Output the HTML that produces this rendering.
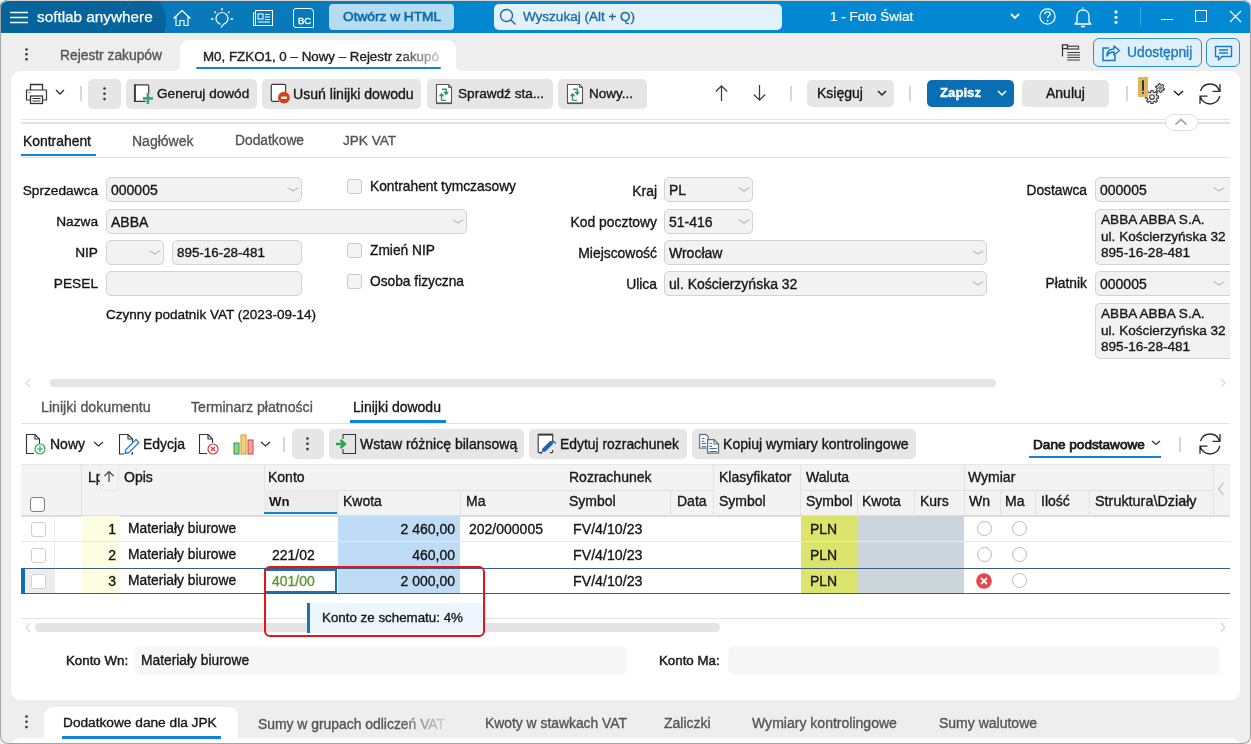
<!DOCTYPE html>
<html><head><meta charset="utf-8">
<style>
*{box-sizing:border-box;margin:0;padding:0}
html,body{width:1251px;height:744px;overflow:hidden;background:#f3f1ef;font-family:"Liberation Sans",sans-serif;color:#161616;font-size:14px}
.a{position:absolute}
.t{position:absolute;white-space:nowrap;font-size:14px;line-height:16px;-webkit-text-stroke:0.35px currentColor;will-change:transform}
svg{position:absolute;overflow:visible}
#win{position:absolute;left:0;top:0;width:1251px;height:744px;background:#eeeeee;border-radius:8px;overflow:hidden}
#frame{position:absolute;left:0;top:0;width:1251px;height:744px;border:1px solid #a4a4a4;border-top-color:#d9d3cd;border-radius:8px;pointer-events:none}
#title{position:absolute;left:0;top:0;width:1251px;height:33px;background:linear-gradient(90deg,#0878b9 0,#0879ba 300px,#0387d1 490px,#0289d4 1251px)}
.btn{position:absolute;background:#e6e6e6;border-radius:5px}
.sep{position:absolute;width:2px;background:#d6d6d6}
.inp{position:absolute;background:#f2f2f2;border:1px solid #d3d3d3;border-radius:5px;height:24.5px}
.inp .v{position:absolute;left:4px;top:4px;font-size:14px;line-height:16px;white-space:nowrap;-webkit-text-stroke:0.35px currentColor;will-change:transform}
.chev{position:absolute;right:5.5px;top:7px;width:6px;height:6px;border-right:1px solid #b5b5b5;border-bottom:1px solid #b5b5b5;transform:scale(1.35,.8) rotate(45deg)}
.cb{position:absolute;width:15px;height:15px;border:1px solid #c9c9c9;border-radius:3px;background:#f4f4f4}
.gray{color:#555}
</style></head><body>
<div id="win">
  <div id="title">
    <svg style="left:0;top:0" width="200" height="33"><path d="M0 0 H157 C163 6 166 14 166 21 C166 27 165 30 164.5 33 H0 Z" fill="#06649c"/><path d="M108 33 L132 0" stroke="#2b7fb3" stroke-width="1" opacity=".5"/></svg>
    <svg style="left:9px;top:11px" width="20" height="13"><path d="M1 1.5H19M1 6.5H19M1 11.5H19" stroke="#fff" stroke-width="1.4"/></svg>
    <div class="t" style="left:37px;top:8px;font-size:15.3px;line-height:17px;color:#fff;-webkit-text-stroke:.25px #fff">softlab anywhere</div>

    <!-- home -->
    <svg style="left:172px;top:9px" width="20" height="18" viewBox="0 0 20 18"><path d="M1.5 9.5 L10 1.5 L18.5 9.5 M4 7.5 V16.5 H8 V11.5 H12 V16.5 H16 V7.5" fill="none" stroke="#fff" stroke-width="1.15" stroke-linejoin="round"/></svg>
    <!-- bulb -->
    <svg style="left:210px;top:7px" width="24" height="22" viewBox="0 0 24 22"><path d="M10.5 17.3 A6 6 0 1 1 13.5 17.3 L11 20.5" fill="none" stroke="#fff" stroke-width="1.2"/><path d="M12 1V3.5 M4.5 4.5 L6 6 M19.5 4.5 L18 6 M1 12H3.5 M20.5 12H23" stroke="#fff" stroke-width="1.3"/></svg>
    <!-- news -->
    <svg style="left:252px;top:9px" width="22" height="18" viewBox="0 0 22 18"><path d="M3.5 1.5 H20.5 V16.5 H1.5 V4 H3.5 Z M3.5 4 V16.5" fill="none" stroke="#fff" stroke-width="1.05"/><rect x="6" y="5" width="5" height="5" fill="none" stroke="#fff" stroke-width="1.05"/><path d="M13 5.5H18 M13 8H18 M13 10.5H18 M6 13H18" stroke="#fff" stroke-width="1.05"/></svg>
    <!-- BC -->
    <div class="a" style="left:293px;top:8px;width:21px;height:20px;border:1.1px solid #fff;border-radius:3px 4px 1px 3px"></div>
    <div class="t" style="left:298px;top:15px;font-size:9.5px;line-height:11px;color:#fff">BC</div>
    <!-- Otworz -->
    <div class="a" style="left:329px;top:4px;width:125px;height:26px;background:#b5dcf2;border-radius:4px"></div>
    <div class="t" style="left:343px;top:9px;font-size:13.7px;color:#0a6aa6;-webkit-text-stroke:0.6px #0a6aa6">Otwórz w HTML</div>
    <!-- search -->
    <div class="a" style="left:494px;top:4px;width:288px;height:26px;background:#e2f1fb;border-radius:5px"></div>
    <svg style="left:499px;top:8px" width="18" height="18" viewBox="0 0 18 18"><circle cx="7.5" cy="7.5" r="6" fill="none" stroke="#1d6da5" stroke-width="1.4"/><path d="M12 12 L16.5 16.5" stroke="#1d6da5" stroke-width="1.5"/></svg>
    <div class="t" style="left:523px;top:9px;font-size:13.5px;color:#1c6aa2">Wyszukaj (Alt + Q)</div>
    <div class="t" style="left:830px;top:8.8px;font-size:13.5px;color:#fff;-webkit-text-stroke:0.2px #fff">1 - Foto Świat</div>
    <svg style="left:1010px;top:13px" width="10" height="7" viewBox="0 0 10 7"><path d="M1 1 L5 5 L9 1" fill="none" stroke="#fff" stroke-width="1.8"/></svg>
    <!-- help -->
    <svg style="left:1038.3px;top:7.2px" width="19" height="19" viewBox="0 0 19 19"><circle cx="9.5" cy="9.5" r="7.6" fill="none" stroke="#fff" stroke-width="1.2"/><path d="M6.8 7.2 C6.8 5.5 8 4.6 9.5 4.6 C11 4.6 12.2 5.5 12.2 7 C12.2 8.8 9.6 9 9.6 11.2" fill="none" stroke="#fff" stroke-width="1.3"/><circle cx="9.6" cy="13.8" r=".9" fill="#fff"/></svg>
    <!-- bell -->
    <svg style="left:1074px;top:7px" width="18" height="21" viewBox="0 0 18 21"><path d="M3 15 V9 C3 5.5 5.5 3 9 3 C12.5 3 15 5.5 15 9 V15 L17 17 H1 L3 15 Z" fill="none" stroke="#fff" stroke-width="1.3" stroke-linejoin="round"/><path d="M8.5 1 H9.5 M7 19.5 H11" stroke="#fff" stroke-width="1.4"/></svg>
    <!-- dots -->
    <svg style="left:1113px;top:10px" width="6" height="17"><rect x="1.6" y="0.6" width="2.8" height="2.8" rx=".6" fill="#fff"/><rect x="1.6" y="5.9" width="2.8" height="2.8" rx=".6" fill="#fff"/><rect x="1.6" y="10.9" width="2.8" height="2.8" rx=".6" fill="#fff"/></svg>
    <div class="a" style="left:1140px;top:7px;width:1px;height:20px;background:#3aa3dc"></div>
    <div class="a" style="left:1161px;top:18.5px;width:12px;height:1.2px;background:#fff"></div>
    <div class="a" style="left:1195px;top:10px;width:12px;height:12px;border:1.2px solid #fff"></div>
    <svg style="left:1229px;top:10px" width="13" height="13" viewBox="0 0 13 13"><path d="M1 1 L12 12 M12 1 L1 12" stroke="#fff" stroke-width="1.2"/></svg>
  </div>

  <!-- tab bar -->
  <svg style="left:23.5px;top:47.5px" width="5" height="13"><circle cx="2.5" cy="1.4" r="1.25" fill="#333"/><circle cx="2.5" cy="6.3" r="1.25" fill="#333"/><circle cx="2.5" cy="11.2" r="1.25" fill="#333"/></svg>
  <div class="t gray" style="left:60px;top:48px;font-size:13.8px">Rejestr zakupów</div>
  <div class="a" style="left:180px;top:40px;width:276px;height:40px;background:#fff;border-radius:9px 9px 0 0"></div>
  <svg style="left:171px;top:62px" width="10" height="10"><path d="M10 0 V10 H0 C6 10 10 6 10 0 Z" fill="#fff"/></svg>
  <svg style="left:455px;top:62px" width="10" height="10"><path d="M0 0 V10 H10 C4 10 0 6 0 0 Z" fill="#fff"/></svg>
  <div class="t" style="left:203px;top:46.5px;line-height:20px;font-size:13.35px;color:#222;-webkit-mask-image:linear-gradient(90deg,#000 0,#000 190px,rgba(0,0,0,.25) 236px);">M0, FZKO1, 0 – Nowy – Rejestr zakupó</div>
  <div class="a" style="left:196px;top:67px;width:245px;height:2.2px;background:#0f86d4;border-radius:1px"></div>
  <!-- list icon -->
  <svg style="left:1060px;top:43px" width="22" height="20" viewBox="0 0 22 20"><path d="M2.5 1.8 V13.6" stroke="#333" stroke-width="1.2"/><rect x="2.5" y="1.8" width="5" height="3.8" fill="none" stroke="#333" stroke-width="1.2"/><rect x="7.5" y="3.2" width="11" height="2.8" fill="none" stroke="#444" stroke-width="1.2"/><path d="M7.2 9.5 H19.9 M7.2 14.4 H19.9" stroke="#2a2a2a" stroke-width="0.9"/><path d="M7.2 12 H19.9 M7.2 17 H19.9" stroke="#777" stroke-width="1.4"/></svg>
  <div class="a" style="left:1093px;top:38px;width:109px;height:29px;background:#dff0fb;border:1px solid #2b8fd3;border-radius:6px"></div>
  <svg style="left:1101px;top:44px" width="20" height="18" viewBox="0 0 20 18"><path d="M8 4 H2 V16.5 H14 V11" fill="none" stroke="#1c79bf" stroke-width="1.5"/><path d="M6 12 C6 7 9 5 13 5 V2 L18.5 6.5 L13 11 V8 C10 8 7.5 9 6 12 Z" fill="none" stroke="#1c79bf" stroke-width="1.5" stroke-linejoin="round"/></svg>
  <div class="t" style="left:1127px;top:45px;font-size:13.8px;color:#1c79bf">Udostępnij</div>
  <div class="a" style="left:1206px;top:38px;width:34px;height:29px;background:#dff0fb;border:1px solid #2b8fd3;border-radius:6px"></div>
  <svg style="left:1214px;top:45px" width="19" height="17" viewBox="0 0 19 17"><path d="M1.5 1.5 H17.5 V11.5 H8 L4.5 15 V11.5 H1.5 Z" fill="none" stroke="#1c79bf" stroke-width="1.4" stroke-linejoin="round"/><path d="M5 5 H14 M5 8 H14" stroke="#1c79bf" stroke-width="1.3"/></svg>

  <!-- panel -->
  <div class="a" id="panel" style="left:11px;top:71px;width:1229px;height:629px;background:#fff;border-radius:9px"></div>
  

  <!-- toolbar -->
  <svg style="left:25px;top:83px" width="23" height="22" viewBox="0 0 23 22"><path d="M5.5 7 V1.5 H17.5 V7" fill="none" stroke="#333" stroke-width="1.3"/><rect x="1.5" y="7" width="20" height="10" rx="0.3" fill="none" stroke="#333" stroke-width="1.2"/><rect x="5.5" y="13" width="12" height="7.5" fill="#fff" stroke="#333" stroke-width="1.3"/><path d="M7.5 15.5 H15.5 M7.5 18 H15.5" stroke="#333" stroke-width="1"/><path d="M3.5 9.5 H5.5" stroke="#1c8fd6" stroke-width="1.2"/></svg>
  <svg style="left:55px;top:89px" width="10" height="7"><path d="M1 1 L5 5 L9 1" fill="none" stroke="#333" stroke-width="1.4"/></svg>
  <div class="sep" style="left:80px;top:86px;height:15px"></div>
  <div class="btn" style="left:88px;top:79px;width:33px;height:30px"></div>
  <svg style="left:102px;top:87px" width="5" height="14"><circle cx="2.5" cy="1.5" r="1.3" fill="#333"/><circle cx="2.5" cy="6.8" r="1.3" fill="#333"/><circle cx="2.5" cy="12.1" r="1.3" fill="#333"/></svg>

  <div class="btn" style="left:126px;top:79px;width:131px;height:30px"></div>
  <svg style="left:133px;top:83px" width="22" height="22" viewBox="0 0 22 22"><path d="M12.7 18.4 H1.8 V1.8 H14.5 Q15.7 1.8 15.7 3 V10" fill="#fff" stroke="#3a3a3a" stroke-width="1.2"/><path d="M1.9 1.4 V18.9" stroke="#3a3a3a" stroke-width="1.9"/><path d="M14.9 10 V20.9 M9.9 15.4 H19.9" stroke="#3aa57a" stroke-width="2.6"/></svg>
  <div class="t" style="left:157px;top:85.5px;font-size:13.6px">Generuj dowód</div>

  <div class="btn" style="left:262px;top:79px;width:159px;height:30px"></div>
  <svg style="left:270px;top:83px" width="22" height="22" viewBox="0 0 22 22"><path d="M9 18.4 H2.8 Q1.3 18.4 1.3 17 V2.8 Q1.3 1.3 2.8 1.3 H14.1 Q15.6 1.3 15.6 2.8 V9" fill="#fff" stroke="#3a3a3a" stroke-width="1.2"/><circle cx="13.9" cy="14.7" r="5.9" fill="#d4401f"/><rect x="11" y="13.6" width="5.8" height="2.3" fill="#fff"/></svg>
  <div class="t" style="left:293px;top:85.5px;font-size:14.1px">Usuń linijki dowodu</div>

  <div class="btn" style="left:427px;top:79px;width:126px;height:30px"></div>
  <svg style="left:435px;top:83px" width="18" height="22" viewBox="0 0 18 22"><path d="M1.5 1.5 H13.5 L16.5 4.5 V20.2 H1.5 Z" fill="#fff" stroke="#555" stroke-width="1.1"/><path d="M1.5 20.3 H16.5" stroke="#555" stroke-width="1.6"/><path d="M13.5 1.5 V4.5 H16.5" fill="none" stroke="#555" stroke-width="0.9"/><path d="M7 6.2 H11.2 V9.5 M6.5 17.4 H11 M6.5 17.4 V12.5" fill="none" stroke="#2e9a62" stroke-width="1.4"/><path d="M8.3 8.8 L14 8.8 L11.1 12.5 Z M3.7 13.3 L9.3 13.3 L6.5 9.7 Z" fill="#2e9a62"/></svg>
  <div class="t" style="left:458px;top:85.5px;font-size:13.6px">Sprawdź sta...</div>

  <div class="btn" style="left:558px;top:79px;width:89px;height:30px"></div>
  <svg style="left:566px;top:83px" width="18" height="22" viewBox="0 0 18 22"><path d="M1.5 1.5 H13.5 L16.5 4.5 V20.2 H1.5 Z" fill="#fff" stroke="#555" stroke-width="1.1"/><path d="M1.5 20.3 H16.5" stroke="#555" stroke-width="1.6"/><path d="M13.5 1.5 V4.5 H16.5" fill="none" stroke="#555" stroke-width="0.9"/><path d="M7 6.2 H11.2 V9.5 M6.5 17.4 H11 M6.5 17.4 V12.5" fill="none" stroke="#2e9a62" stroke-width="1.4"/><path d="M8.3 8.8 L14 8.8 L11.1 12.5 Z M3.7 13.3 L9.3 13.3 L6.5 9.7 Z" fill="#2e9a62"/></svg>
  <div class="t" style="left:589px;top:85.5px;font-size:13.5px">Nowy...</div>

  <svg style="left:714px;top:84px" width="15" height="18" viewBox="0 0 15 18"><path d="M7.5 17 V1.8 M1.8 7.5 L7.5 1.8 L13.2 7.5" fill="none" stroke="#3a3a3a" stroke-width="1.25"/></svg>
  <svg style="left:752px;top:84px" width="15" height="18" viewBox="0 0 15 18"><path d="M7.5 1 V16.2 M1.8 10.5 L7.5 16.2 L13.2 10.5" fill="none" stroke="#3a3a3a" stroke-width="1.25"/></svg>
  <div class="sep" style="left:790px;top:86px;height:15px"></div>
  <div class="btn" style="left:807px;top:80px;width:87px;height:27px"></div>
  <div class="t" style="left:817px;top:85px;font-size:14px">Księguj</div>
  <svg style="left:877px;top:90px" width="10" height="7"><path d="M1 1 L5 5 L9 1" fill="none" stroke="#222" stroke-width="1.5"/></svg>
  <div class="sep" style="left:909px;top:86px;height:15px"></div>
  <div class="a" style="left:927px;top:80px;width:87px;height:27px;background:#0a6eb2;border-radius:5px"></div>
  <div class="t" style="left:940px;top:85px;font-size:13.2px;color:#fff;font-weight:bold">Zapisz</div>
  <svg style="left:997px;top:90px" width="10" height="7"><path d="M1 1 L5 5 L9 1" fill="none" stroke="#fff" stroke-width="1.5"/></svg>
  <div class="btn" style="left:1022px;top:80px;width:87px;height:27px"></div>
  <div class="t" style="left:1046px;top:85px;font-size:14px">Anuluj</div>
  <div class="sep" style="left:1126px;top:86px;height:15px"></div>
  <svg style="left:1142.5px;top:82px" width="24" height="24" viewBox="0 0 24 24"><path d="M13.77 13.87 L15.51 13.92 L15.51 16.08 L13.77 16.13 L13.17 17.57 L14.37 18.84 L12.84 20.37 L11.57 19.17 L10.13 19.77 L10.08 21.51 L7.92 21.51 L7.87 19.77 L6.43 19.17 L5.16 20.37 L3.63 18.84 L4.83 17.57 L4.23 16.13 L2.49 16.08 L2.49 13.92 L4.23 13.87 L4.83 12.43 L3.63 11.16 L5.16 9.63 L6.43 10.83 L7.87 10.23 L7.92 8.49 L10.08 8.49 L10.13 10.23 L11.57 10.83 L12.84 9.63 L14.37 11.16 L13.17 12.43 Z" fill="#fff" stroke="#3a3a3a" stroke-width="1.15" stroke-linejoin="round"/><circle cx="9" cy="15" r="2.3" fill="none" stroke="#3a3a3a" stroke-width="1.15"/><path d="M20.10 5.89 L21.38 6.40 L20.84 8.15 L19.50 7.84 L18.64 8.63 L18.85 9.99 L17.06 10.40 L16.66 9.08 L15.55 8.74 L14.46 9.60 L13.22 8.25 L14.16 7.24 L13.90 6.11 L12.62 5.60 L13.16 3.85 L14.50 4.16 L15.36 3.37 L15.15 2.01 L16.94 1.60 L17.34 2.92 L18.45 3.26 L19.54 2.40 L20.78 3.75 L19.84 4.76 Z" fill="#fff" stroke="#3a3a3a" stroke-width="1.1" stroke-linejoin="round"/><circle cx="17" cy="6" r="1.3" fill="none" stroke="#3a3a3a" stroke-width="1"/></svg>
  <div class="a" style="left:1138px;top:77px;width:10px;height:20px;background:#e0b55c"></div>
  <div class="a" style="left:1142.2px;top:79.5px;width:2.2px;height:11px;background:#2f3640;border-radius:1px"></div>
  <div class="a" style="left:1142.2px;top:92.3px;width:2.2px;height:2.2px;background:#2f3640;border-radius:1px"></div>
  <svg style="left:1173px;top:90px" width="11" height="7"><path d="M1 1 L5.5 5 L10 1" fill="none" stroke="#222" stroke-width="1.4"/></svg>
  <svg style="left:1198px;top:82px" width="24" height="24" viewBox="0 0 24 24"><path d="M2.46 9 A10 10 0 0 1 21.54 9 M22 2 V9.3 H14.5 M21.8 14 A10 10 0 0 1 2.2 14 M2 21.8 V14.2 H9.5" fill="none" stroke="#2b2b2b" stroke-width="1.3"/></svg>

  <!-- splitter -->
  <div class="a" style="left:21px;top:119px;width:1209px;height:1.2px;background:#e4e4e4"></div>
  <div class="a" style="left:21px;top:122px;width:1209px;height:2px;background:#e2e2e2"></div>
  <div class="a" style="left:1165px;top:114px;width:33px;height:17px;background:#fff;border:1px solid #dedede;border-radius:9px"></div>
  <svg style="left:1174px;top:118px" width="14" height="8"><path d="M1.5 6.5 L7 1.5 L12.5 6.5" fill="none" stroke="#999" stroke-width="1.6"/></svg>

  <!-- form tabs -->
  <div class="t" style="left:23px;top:132.7px;font-size:13.9px">Kontrahent</div>
  <div class="a" style="left:21px;top:154px;width:75px;height:2.2px;background:#0f86d4"></div>
  <div class="t gray" style="left:132px;top:132.7px;font-size:14px">Nagłówek</div>
  <div class="t gray" style="left:235px;top:132.7px;font-size:13.8px">Dodatkowe</div>
  <div class="t gray" style="left:343px;top:132.7px;font-size:13.6px">JPK VAT</div>
  <div class="a" style="left:21px;top:157px;width:1209px;height:1px;background:#e2e2e2"></div>

  <div class="a" style="left:21px;top:160px;width:1209px;height:210px;overflow:hidden">
   <div class="a" style="left:-21px;top:-160px;width:1251px;height:400px">
    <div class="t" style="left:0;width:98px;text-align:right;top:183px;font-size:13.7px">Sprzedawca</div>
    <div class="inp" style="left:106px;top:177px;width:196px"><div class="v">000005</div><div class="chev"></div></div>
    <div class="cb" style="left:347px;top:179px"></div>
    <div class="t" style="left:370px;top:179px;font-size:13.75px">Kontrahent tymczasowy</div>

    <div class="t" style="left:0;width:98px;text-align:right;top:214px;font-size:13.7px">Nazwa</div>
    <div class="inp" style="left:106px;top:209px;width:361px"><div class="v">ABBA</div><div class="chev"></div></div>

    <div class="t" style="left:0;width:98px;text-align:right;top:245px;font-size:13.7px">NIP</div>
    <div class="inp" style="left:106px;top:240px;width:58px"><div class="chev"></div></div>
    <div class="inp" style="left:172px;top:240px;width:130px"><div class="v" style="font-size:13.4px">895-16-28-481</div></div>
    <div class="cb" style="left:347px;top:243px"></div>
    <div class="t" style="left:370px;top:243px;font-size:13.75px">Zmień NIP</div>

    <div class="t" style="left:0;width:98px;text-align:right;top:276px;font-size:13.7px">PESEL</div>
    <div class="inp" style="left:106px;top:271px;width:196px"></div>
    <div class="cb" style="left:347px;top:274px"></div>
    <div class="t" style="left:370px;top:274px;font-size:13.75px">Osoba fizyczna</div>

    <div class="t" style="left:106px;top:306.5px;font-size:13.55px">Czynny podatnik VAT (2023-09-14)</div>

    <div class="t" style="left:500px;width:157px;text-align:right;top:183px;font-size:13.9px">Kraj</div>
    <div class="inp" style="left:664px;top:177px;width:89px"><div class="v">PL</div><div class="chev"></div></div>
    <div class="t" style="left:500px;width:157px;text-align:right;top:214px;font-size:13.9px">Kod pocztowy</div>
    <div class="inp" style="left:664px;top:209px;width:89px"><div class="v">51-416</div><div class="chev"></div></div>
    <div class="t" style="left:500px;width:157px;text-align:right;top:245px;font-size:13.9px">Miejscowość</div>
    <div class="inp" style="left:664px;top:240px;width:323px"><div class="v">Wrocław</div><div class="chev"></div></div>
    <div class="t" style="left:500px;width:157px;text-align:right;top:276px;font-size:13.9px">Ulica</div>
    <div class="inp" style="left:664px;top:271px;width:323px"><div class="v">ul. Kościerzyńska 32</div><div class="chev"></div></div>

    <div class="t" style="left:950px;width:137px;text-align:right;top:183px;font-size:13.8px">Dostawca</div>
    <div class="inp" style="left:1095px;top:177px;width:145px"><div class="v">000005</div><div class="chev" style="right:17.5px"></div></div>
    <div class="a" style="left:1095px;top:209px;width:145px;height:56px;background:#f2f2f2;border:1px solid #d3d3d3;border-radius:5px"></div>
    <div class="t" style="left:1101px;top:212px;font-size:13.6px;line-height:16.5px">ABBA ABBA S.A.<br>ul. Kościerzyńska 32<br>895-16-28-481</div>
    <div class="t" style="left:950px;width:137px;text-align:right;top:276px;font-size:13.8px">Płatnik</div>
    <div class="inp" style="left:1095px;top:271px;width:145px"><div class="v">000005</div><div class="chev" style="right:17.5px"></div></div>
    <div class="a" style="left:1095px;top:303px;width:145px;height:56px;background:#f2f2f2;border:1px solid #d3d3d3;border-radius:5px"></div>
    <div class="t" style="left:1101px;top:306px;font-size:13.6px;line-height:16.5px">ABBA ABBA S.A.<br>ul. Kościerzyńska 32<br>895-16-28-481</div>
   </div>
  </div>
  <!-- h scroll -->
  <svg style="left:24px;top:378px" width="8" height="10"><path d="M6 1 L2 5 L6 9" fill="none" stroke="#d8d8d8" stroke-width="1.2"/></svg>
  <div class="a" style="left:50px;top:379px;width:946px;height:8px;background:#e4e4e4;border-radius:4px"></div>
  <svg style="left:1219px;top:378px" width="8" height="10"><path d="M2 1 L6 5 L2 9" fill="none" stroke="#d8d8d8" stroke-width="1.2"/></svg>

  <!-- lower tabs -->
  <div class="t gray" style="left:41px;top:399px;font-size:14.2px">Linijki dokumentu</div>
  <div class="t gray" style="left:191px;top:399px;font-size:14.15px">Terminarz płatności</div>
  <div class="t" style="left:353px;top:399px;font-size:14px">Linijki dowodu</div>
  <div class="a" style="left:350px;top:420px;width:96px;height:2.5px;background:#0f86d4"></div>
  <div class="a" style="left:21px;top:423px;width:1209px;height:1px;background:#e2e2e2"></div>

  <!-- lower toolbar -->
  <svg style="left:25px;top:433px" width="24" height="23" viewBox="0 0 24 23"><path d="M9 20.5 H1.5 V1.5 H10 L14.5 6 V11" fill="none" stroke="#333" stroke-width="1.1"/><path d="M10 1.5 V6 H14.5" fill="none" stroke="#333" stroke-width="1.1"/><circle cx="15" cy="16" r="5" fill="#fff" stroke="#2aa552" stroke-width="1.2"/><path d="M15 13 V19 M12 16 H18" stroke="#2aa552" stroke-width="1.2"/></svg>
  <div class="t" style="left:50px;top:436px;font-size:14px">Nowy</div>
  <svg style="left:93px;top:441px" width="11" height="7"><path d="M1 1 L5.5 5 L10 1" fill="none" stroke="#333" stroke-width="1.3"/></svg>
  <svg style="left:118px;top:433px" width="24" height="23" viewBox="0 0 24 23"><path d="M6 21 H1.5 V1.5 H10 L14.5 6 V9 M10 1.5 V6 H14.5 M13 21 H14.5 V19" fill="none" stroke="#333" stroke-width="1.1"/><path d="M7 20.5 L8 16.5 L18 6.5 L21 9.5 L11 19.5 Z" fill="none" stroke="#2a7fd0" stroke-width="1.3" stroke-linejoin="round"/></svg>
  <div class="t" style="left:143px;top:436px;font-size:14px">Edycja</div>
  <svg style="left:198px;top:433px" width="24" height="23" viewBox="0 0 24 23"><path d="M9 20.5 H1.5 V1.5 H10 L14.5 6 V10 M10 1.5 V6 H14.5" fill="none" stroke="#333" stroke-width="1.1"/><circle cx="15" cy="16" r="5" fill="#fff" stroke="#e0393b" stroke-width="1.2"/><path d="M13 14 L17 18 M17 14 L13 18" stroke="#e0393b" stroke-width="1.2"/></svg>
  <svg style="left:233px;top:434px" width="22" height="21" viewBox="0 0 22 21"><rect x="1" y="9" width="5" height="11" fill="#8fd38f" stroke="#2e9a45" stroke-width="1"/><rect x="8" y="1" width="5" height="19" fill="#f6cf7d" stroke="#d99a2b" stroke-width="1"/><rect x="15" y="6" width="5" height="14" fill="#f2a5a5" stroke="#d9403f" stroke-width="1"/></svg>
  <svg style="left:260px;top:441px" width="11" height="7"><path d="M1 1 L5.5 5 L10 1" fill="none" stroke="#333" stroke-width="1.3"/></svg>
  <div class="sep" style="left:283px;top:437px;height:15px"></div>
  <div class="btn" style="left:292px;top:429px;width:32px;height:30px"></div>
  <svg style="left:305px;top:437px" width="5" height="14"><circle cx="2.5" cy="1.5" r="1.3" fill="#333"/><circle cx="2.5" cy="6.8" r="1.3" fill="#333"/><circle cx="2.5" cy="12.1" r="1.3" fill="#333"/></svg>

  <div class="btn" style="left:329px;top:429px;width:195px;height:30px"></div>
  <svg style="left:335px;top:433px" width="22" height="22" viewBox="0 0 22 22"><path d="M8 6 V1.5 H20.5 V20.5 H8 V16" fill="none" stroke="#333" stroke-width="1.1"/><path d="M1 11 H9 M5.5 7 L10 11 L5.5 15" fill="none" stroke="#2aa552" stroke-width="2.4"/></svg>
  <div class="t" style="left:360px;top:436px;font-size:14px">Wstaw różnicę bilansową</div>
  <div class="btn" style="left:529px;top:429px;width:158px;height:30px"></div>
  <svg style="left:536px;top:433px" width="24" height="24" viewBox="0 0 24 24"><path d="M5.5 19.6 H3.2 Q2.2 19.6 2.2 18.6 V1.5 H16.7 V9.5 M14 19.6 H15.7 Q16.7 19.6 16.7 18.6 V17" fill="#fff" stroke="#3a3a3a" stroke-width="1.1"/><path d="M2.2 1.6 H16.7" stroke="#3a3a3a" stroke-width="2"/><path d="M8.5 16.5 L15 10" stroke="#2563b0" stroke-width="4.2" stroke-linecap="round"/><path d="M4.3 20.8 L8.5 16.5 M6 16.5 H9 M17 8 L20 10.5" stroke="#2563b0" stroke-width="1.3"/></svg>
  <div class="t" style="left:560px;top:436px;font-size:13.9px">Edytuj rozrachunek</div>
  <div class="btn" style="left:692px;top:429px;width:224px;height:30px"></div>
  <svg style="left:698px;top:433px" width="24" height="24" viewBox="0 0 24 24"><path d="M1.6 1.5 H8 L10.5 4 V15.2 H1.6 Z" fill="#fff" stroke="#777" stroke-width="1.3"/><path d="M4 5.5 H6.5 M4 8.3 H6.5 M4 10.5 H8 M4 13.4 H8" stroke="#2e6db5" stroke-width="1"/><path d="M9.6 6.6 H16 L20.5 11 V20.2 H9.6 Z" fill="#fff" stroke="#6a6a6a" stroke-width="1.3"/><path d="M16 6.6 V11 H20.5" fill="none" stroke="#6a6a6a" stroke-width="1.1"/><path d="M11.5 10.3 H14 M11.5 13.4 H14 M11.5 15.5 H18.8 M11.5 18.5 H18.8" stroke="#2e6db5" stroke-width="1.1"/></svg>
  <div class="t" style="left:723px;top:436px;font-size:14.1px">Kopiuj wymiary kontrolingowe</div>

  <div class="t" style="left:1033px;top:436.5px;font-size:13.6px;-webkit-text-stroke:.75px #1a1a1a;color:#1a1a1a">Dane podstawowe</div>
  <svg style="left:1151px;top:440px" width="10" height="6"><path d="M1 1 L5 4.5 L9 1" fill="none" stroke="#333" stroke-width="1.3"/></svg>
  <div class="a" style="left:1029px;top:456px;width:132px;height:2.2px;background:#0f86d4"></div>
  <div class="sep" style="left:1179px;top:437px;height:15px"></div>
  <svg style="left:1198px;top:432px" width="24" height="24" viewBox="0 0 24 24"><path d="M2.46 9 A10 10 0 0 1 21.54 9 M22 2 V9.3 H14.5 M21.8 14 A10 10 0 0 1 2.2 14 M2 21.8 V14.2 H9.5" fill="none" stroke="#2b2b2b" stroke-width="1.3"/></svg>
<div class="a" style="left:21px;top:464px;width:1209px;height:52px;background:#f3f3f3"></div>
<div class="a" style="left:21px;top:464px;width:1209px;height:1px;background:#e6e6e6"></div>
<div class="a" style="left:21px;top:515px;width:1209px;height:1.5px;background:#dcdcdc"></div>
<div class="a" style="left:54px;top:516px;width:1px;height:77px;background:#ececec"></div>
<div class="a" style="left:81px;top:464px;width:1px;height:52px;background:#e2e2e2"></div>
<div class="a" style="left:264px;top:464px;width:1px;height:52px;background:#e2e2e2"></div>
<div class="a" style="left:337px;top:490px;width:1px;height:26px;background:#e2e2e2"></div>
<div class="a" style="left:460px;top:490px;width:1px;height:26px;background:#e2e2e2"></div>
<div class="a" style="left:670px;top:490px;width:1px;height:26px;background:#e2e2e2"></div>
<div class="a" style="left:713px;top:464px;width:1px;height:52px;background:#e2e2e2"></div>
<div class="a" style="left:800px;top:464px;width:1px;height:52px;background:#e2e2e2"></div>
<div class="a" style="left:857px;top:490px;width:1px;height:26px;background:#e2e2e2"></div>
<div class="a" style="left:914px;top:490px;width:1px;height:26px;background:#e2e2e2"></div>
<div class="a" style="left:964px;top:464px;width:1px;height:52px;background:#e2e2e2"></div>
<div class="a" style="left:1000px;top:490px;width:1px;height:26px;background:#e2e2e2"></div>
<div class="a" style="left:1035px;top:490px;width:1px;height:26px;background:#e2e2e2"></div>
<div class="a" style="left:1089px;top:490px;width:1px;height:26px;background:#e2e2e2"></div>
<div class="a" style="left:1213px;top:464px;width:1px;height:52px;background:#e2e2e2"></div>
<div class="a" style="left:264px;top:490px;width:449px;height:1px;background:#e2e2e2"></div>
<div class="a" style="left:800px;top:490px;width:413px;height:1px;background:#e2e2e2"></div>
<div class="t" style="left:87.5px;top:469px;font-size:14px;">L<span style="display:inline-block;width:7px;overflow:hidden;vertical-align:top">p</span></div>
<div class="a" style="left:100px;top:465px;width:19px;height:26px;background:#f3f3f3;border:1px solid #e6e6e6;border-top:none"></div>
<svg style="left:103px;top:470px" width="12" height="13"><path d="M6 12 V1.5 M1.5 6 L6 1.5 L10.5 6" fill="none" stroke="#444" stroke-width="1.2"/></svg>
<div class="t" style="left:124px;top:469px;font-size:14px;">Opis</div>
<div class="t" style="left:268px;top:469px;font-size:14px;">Konto</div>
<div class="t" style="left:569px;top:469px;font-size:14px;">Rozrachunek</div>
<div class="t" style="left:719px;top:469px;font-size:14px;">Klasyfikator</div>
<div class="t" style="left:806px;top:469px;font-size:14px;">Waluta</div>
<div class="t" style="left:968px;top:469px;font-size:14px;">Wymiar</div>
<div class="a" style="left:264px;top:490px;width:73px;height:24px;background:#ececec"></div>
<div class="a" style="left:264px;top:511.7px;width:73px;height:2.1px;background:#0f86d4"></div>
<div class="t" style="left:269px;top:494px;font-size:13.2px;font-weight:bold;-webkit-text-stroke:0">Wn</div>
<div class="t" style="left:343px;top:493px;font-size:14px;">Kwota</div>
<div class="t" style="left:466px;top:493px;font-size:14px;">Ma</div>
<div class="t" style="left:569px;top:493px;font-size:14px;">Symbol</div>
<div class="t" style="left:677px;top:493px;font-size:14px;">Data</div>
<div class="t" style="left:719px;top:493px;font-size:14px;">Symbol</div>
<div class="t" style="left:806px;top:493px;font-size:14px;">Symbol</div>
<div class="t" style="left:862px;top:493px;font-size:14px;">Kwota</div>
<div class="t" style="left:920px;top:493px;font-size:14px;">Kurs</div>
<div class="t" style="left:969px;top:493px;font-size:14px;">Wn</div>
<div class="t" style="left:1005px;top:493px;font-size:14px;">Ma</div>
<div class="t" style="left:1041px;top:493px;font-size:14px;">Ilość</div>
<div class="t" style="left:1095px;top:493px;font-size:14px;font-size:14.4px">Struktura\Działy</div>
<svg style="left:1217px;top:482px" width="8" height="14"><path d="M6.5 1 L1.5 7 L6.5 13" fill="none" stroke="#c4c4c4" stroke-width="1.3"/></svg>
<div class="cb" style="left:30px;top:497px;width:15px;height:15px;background:#fff;border-color:#7d7d7d;border-width:1.4px"></div>
<div class="a" style="left:82px;top:516px;width:38px;height:26px;background:#fdfde2"></div>
<div class="a" style="left:338px;top:516px;width:122px;height:26px;background:#bfdcf6"></div>
<div class="a" style="left:801px;top:516px;width:56px;height:26px;background:#dde46e"></div>
<div class="a" style="left:857px;top:516px;width:107px;height:26px;background:#cdd5dc"></div>
<div class="a" style="left:21px;top:541px;width:1209px;height:1px;background:#e9e9e9"></div>
<div class="cb" style="left:31px;top:522px;width:15px;height:15px;background:#fff;border-color:#cfcfcf"></div>
<div class="t" style="left:82px;width:34px;text-align:right;top:520.7px">1</div>
<div class="t" style="left:128px;top:520.7px;font-size:13.8px">Materiały biurowe</div>
<div class="t" style="left:338px;width:117px;text-align:right;top:520.7px">2 460,00</div>
<div class="t" style="left:469px;top:520.7px">202/000005</div>
<div class="t" style="left:573px;top:520.7px;font-size:14.2px">FV/4/10/23</div>
<div class="t" style="left:810px;top:520.7px">PLN</div>
<div class="a" style="left:977px;top:521px;width:15px;height:15px;border:1px solid #b9b9b9;border-radius:50%"></div>
<div class="a" style="left:1012px;top:521px;width:15px;height:15px;border:1px solid #b9b9b9;border-radius:50%"></div>
<div class="a" style="left:82px;top:542px;width:38px;height:26px;background:#fdfde2"></div>
<div class="a" style="left:338px;top:542px;width:122px;height:26px;background:#bfdcf6"></div>
<div class="a" style="left:801px;top:542px;width:56px;height:26px;background:#dde46e"></div>
<div class="a" style="left:857px;top:542px;width:107px;height:26px;background:#cdd5dc"></div>
<div class="cb" style="left:31px;top:548px;width:15px;height:15px;background:#fff;border-color:#cfcfcf"></div>
<div class="t" style="left:82px;width:34px;text-align:right;top:546.7px">2</div>
<div class="t" style="left:128px;top:546.7px;font-size:13.8px">Materiały biurowe</div>
<div class="t" style="left:272px;top:546.7px">221/02</div>
<div class="t" style="left:338px;width:117px;text-align:right;top:546.7px">460,00</div>
<div class="t" style="left:573px;top:546.7px;font-size:14.2px">FV/4/10/23</div>
<div class="t" style="left:810px;top:546.7px">PLN</div>
<div class="a" style="left:977px;top:547px;width:15px;height:15px;border:1px solid #b9b9b9;border-radius:50%"></div>
<div class="a" style="left:1012px;top:547px;width:15px;height:15px;border:1px solid #b9b9b9;border-radius:50%"></div>
<div class="a" style="left:82px;top:568px;width:38px;height:25px;background:#fdfde2"></div>
<div class="a" style="left:338px;top:568px;width:122px;height:25px;background:#bfdcf6"></div>
<div class="a" style="left:801px;top:568px;width:56px;height:25px;background:#dde46e"></div>
<div class="a" style="left:857px;top:568px;width:107px;height:25px;background:#cdd5dc"></div>
<div class="cb" style="left:31px;top:574px;width:15px;height:15px;background:#fff;border-color:#cfcfcf"></div>
<div class="t" style="left:82px;width:34px;text-align:right;top:572.7px">3</div>
<div class="t" style="left:128px;top:572.7px;font-size:13.8px">Materiały biurowe</div>
<div class="t" style="left:338px;width:117px;text-align:right;top:572.7px">2 000,00</div>
<div class="t" style="left:573px;top:572.7px;font-size:14.2px">FV/4/10/23</div>
<div class="t" style="left:810px;top:572.7px">PLN</div>
<svg style="left:976px;top:573px" width="16" height="16"><circle cx="8" cy="8" r="7.8" fill="#e8474a"/><path d="M5 5 L11 11 M11 5 L5 11" stroke="#fff" stroke-width="1.8"/></svg>
<div class="a" style="left:1012px;top:573px;width:15px;height:15px;border:1px solid #b9b9b9;border-radius:50%"></div>
<div class="a" style="left:24px;top:569px;width:30px;height:24px;background:#ececec"></div>
<div class="cb" style="left:31px;top:574px;width:15px;height:15px;background:#fff;border-color:#cfcfcf"></div>
<div class="a" style="left:21px;top:541px;width:1209px;height:1px;background:#e9e9e9"></div>
<div class="a" style="left:21px;top:568px;width:1209px;height:1.2px;background:#3f5d78"></div>
<div class="a" style="left:21px;top:592.5px;width:1209px;height:1.2px;background:#3f5d78"></div>
<div class="a" style="left:21px;top:568px;width:3.5px;height:25.5px;background:#0f6fb0"></div>
<div class="a" style="left:264px;top:569px;width:73px;height:23.5px;background:#fff;border:2px solid #1f6fae"></div>
<div class="t" style="left:272px;top:572.7px;color:#5a9634">401/00</div>
<div class="a" style="left:21px;top:618px;width:1209px;height:1px;background:#e4e4e4"></div>
<svg style="left:24px;top:622px" width="8" height="11"><path d="M6 1 L2 5.5 L6 10" fill="none" stroke="#d8d8d8" stroke-width="1.2"/></svg>
<div class="a" style="left:35px;top:623px;width:685px;height:9px;background:#e4e4e4;border-radius:5px"></div>
<svg style="left:1219px;top:622px" width="8" height="11"><path d="M2 1 L6 5.5 L2 10" fill="none" stroke="#d4d4d4" stroke-width="1.2"/></svg>
<div class="a" style="left:307px;top:603px;width:176px;height:30px;background:#edf6fd"></div>
<div class="a" style="left:307px;top:603px;width:3px;height:30px;background:#1f73b0"></div>
<div class="t" style="left:322px;top:610px;font-size:13.35px">Konto ze schematu: 4%</div>
<div class="a" style="left:264px;top:566px;width:221px;height:71px;border:2px solid #e5131d;border-radius:6px"></div>
<div class="t" style="left:66px;top:653px;font-size:13.3px;-webkit-text-stroke:.5px #222">Konto Wn:</div>
<div class="a" style="left:135px;top:646px;width:492px;height:29px;background:#f7f7f7;border-radius:6px"></div>
<div class="t" style="left:141px;top:652.5px;font-size:13.8px">Materiały biurowe</div>
<div class="t" style="left:659px;top:653px;font-size:13.3px;-webkit-text-stroke:.5px #222">Konto Ma:</div>
<div class="a" style="left:728px;top:646px;width:492px;height:29px;background:#f7f7f7;border-radius:6px"></div>
<svg style="left:24px;top:715px" width="5" height="14"><circle cx="2.5" cy="1.5" r="1.3" fill="#333"/><circle cx="2.5" cy="6.8" r="1.3" fill="#333"/><circle cx="2.5" cy="12.1" r="1.3" fill="#333"/></svg>
<div class="a" style="left:11px;top:738px;width:1229px;height:10px;background:#fff;border-radius:9px 9px 0 0"></div>
<div class="a" style="left:44px;top:707px;width:194px;height:40px;background:#fff;border-radius:9px 9px 0 0"></div>
<div class="t" style="left:63px;top:715px;font-size:13.7px">Dodatkowe dane dla JPK</div>
<div class="a" style="left:62px;top:736px;width:159px;height:2.5px;background:#0f86d4"></div>
<div class="t gray" style="left:258px;top:714px;line-height:20px;font-size:13.9px;-webkit-mask-image:linear-gradient(90deg,#000 0,#000 140px,rgba(0,0,0,.2) 185px)">Sumy w grupach odliczeń VAT</div>
<div class="t gray" style="left:485px;top:715px;font-size:13.86px">Kwoty w stawkach VAT</div>
<div class="t gray" style="left:664px;top:715px;font-size:14px">Zaliczki</div>
<div class="t gray" style="left:752px;top:715px;font-size:14.04px">Wymiary kontrolingowe</div>
<div class="t gray" style="left:939px;top:715px;font-size:14px">Sumy walutowe</div>
</div>
<div id="frame"></div>
</body></html>
